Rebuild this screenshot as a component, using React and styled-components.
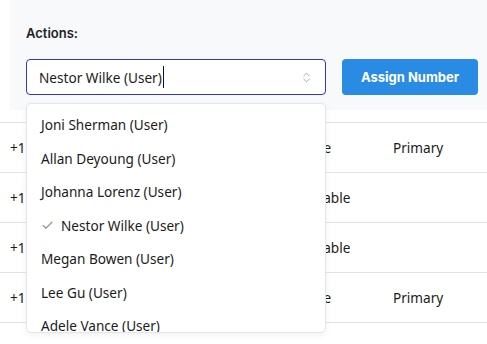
import React from "react";
import styled, { createGlobalStyle } from "styled-components";
import { ChevronsUpDown, Check } from "lucide-react";

const Global = createGlobalStyle`
  html, body { margin: 0; padding: 0; background: #ffffff; overflow: hidden; }
  body { font-family: "Noto Sans", "Open Sans", sans-serif; color: #1f2328; }
`;

const Page = styled.div`
  width: 487px;
  height: 344px;
  overflow: hidden;
  position: relative;
`;

const Panel = styled.section`
  margin-left: 10px;
  width: 500px;
  box-sizing: border-box;
  background: #f8f9fa;
  padding: 23px 16px 15px 16px;
  display: flex;
  flex-direction: column;
  gap: 16px;
`;

const Label = styled.div`
  font-family: Inter, sans-serif;
  font-weight: 600;
  font-size: 13px;
  line-height: 20px;
  color: #1b1f24;
`;

const Controls = styled.div`
  display: flex;
  gap: 16px;
  align-items: center;
`;

const SelectWrap = styled.div`
  position: relative;
  width: 300px;
`;

const Input = styled.div`
  box-sizing: border-box;
  height: 36px;
  border: 1px solid #3434cf;
  border-radius: 4px;
  background: #fff;
  display: flex;
  align-items: center;
  padding: 0 12px 0 12px;
  font-size: 13.6px;
  color: #1b1b1b;
`;

const Caret = styled.span`
  display: inline-block;
  width: 1px;
  height: 22px;
  background: #111;
  margin-left: 1px;
`;

const InputText = styled.span`
  flex: 1;
  display: flex;
  align-items: center;
`;

const Chevron = styled(ChevronsUpDown)`
  color: #8f959e;
`;

const Button = styled.button`
  height: 36px;
  width: 136px;
  border: none;
  border-radius: 4px;
  background: #2a8be5;
  color: #fff;
  font-family: Inter, sans-serif;
  font-weight: 700;
  font-size: 13px;
  padding: 0;
`;

const Menu = styled.ul`
  position: absolute;
  top: 44px;
  left: 0;
  width: 300px;
  height: 230px;
  box-sizing: border-box;
  margin: 0;
  padding: 4px 0 0 0;
  list-style: none;
  background: #fff;
  border: 1px solid #e3e5e8;
  border-radius: 5px;
  box-shadow: 0 2px 6px rgba(0, 0, 0, 0.06);
  overflow: hidden;
  z-index: 5;
`;

const Item = styled.li`
  height: 33.5px;
  display: flex;
  align-items: center;
  padding-left: 14px;
  font-size: 13.6px;
  color: #1b1b1b;
  gap: 7px;
`;

const Tick = styled(Check)`
  color: #9a9a9a;
`;

const Table = styled.div`
  margin-top: 12px;
  border-top: 1px solid #e2e2e2;
`;

const Row = styled.div`
  display: grid;
  grid-template-columns: 283px 100px 1fr;
  height: 49px;
  align-items: center;
  border-bottom: 1px solid #e2e2e2;
  padding-left: 10px;
  font-size: 13.6px;
  color: #1b1b1b;
`;

const users = [
  "Joni Sherman (User)",
  "Allan Deyoung (User)",
  "Johanna Lorenz (User)",
  "Nestor Wilke (User)",
  "Megan Bowen (User)",
  "Lee Gu (User)",
  "Adele Vance (User)",
];

const rows = [
  ["+1 (425) 555-0101", "Active", "Primary"],
  ["+1 (425) 555-0102", "Available", ""],
  ["+1 (425) 555-0103", "Available", ""],
  ["+1 (425) 555-0104", "Active", "Primary"],
];

export default function App() {
  return (
    <Page>
      <Global />
      <Panel>
        <Label>Actions:</Label>
        <Controls>
          <SelectWrap>
            <Input>
              <InputText>
                Nestor Wilke (User)
                <Caret />
              </InputText>
              <Chevron size={13} strokeWidth={1.5} />
            </Input>
            <Menu>
              {users.map((u) => {
                const sel = u.startsWith("Nestor");
                return (
                  <Item key={u}>
                    {sel && <Tick size={13} strokeWidth={2.5} />}
                    {u}
                  </Item>
                );
              })}
            </Menu>
          </SelectWrap>
          <Button>Assign Number</Button>
        </Controls>
      </Panel>
      <Table>
        {rows.map((r, i) => (
          <Row key={i}>
            <span>{r[0]}</span>
            <span>{r[1]}</span>
            <span>{r[2]}</span>
          </Row>
        ))}
      </Table>
    </Page>
  );
}
